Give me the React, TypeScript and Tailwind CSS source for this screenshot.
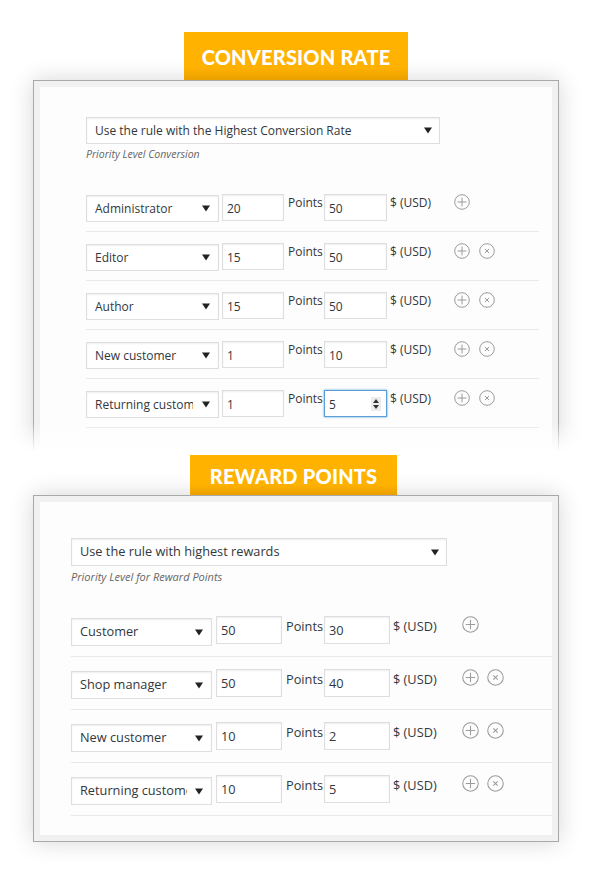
import React from "react";

type Cfg = {
  rowCls: string;
  selCls: string;
  selTextCls: string;
  arrowBoxCls: string;
  inpCls: string;
  labelCls: string;
  usdCls: string;
  iconGap: string;
  icon: number;
};

const c1: Cfg = {
  rowCls: "flex items-start pt-[11px] pb-[9px] border-b border-[#e9e9e9] text-[12px] text-[#32373c]",
  selCls: "mt-[1px] h-[27px] w-[133px] pl-[8px]",
  selTextCls: "",
  arrowBoxCls: "w-[25px]",
  inpCls: "h-[27px] pl-[4px]",
  labelCls: "leading-[18px]",
  usdCls: "ml-[3px] w-[64px] leading-[18px]",
  iconGap: "gap-[9px]",
  icon: 16,
};

const c2: Cfg = {
  rowCls: "flex items-start pt-[12px] pb-[10px] border-b border-[#e9e9e9] text-[12.75px] text-[#32373c]",
  selCls: "mt-[2px] h-[28px] w-[141px] pl-[8px]",
  selTextCls: "",
  arrowBoxCls: "w-[24px]",
  inpCls: "h-[28px] pl-[4px]",
  labelCls: "leading-[20px]",
  usdCls: "ml-[3px] w-[69px] leading-[20px]",
  iconGap: "gap-[8px]",
  icon: 17,
};

function Arrow() {
  return (
    <svg width="8" height="7" viewBox="0 0 8 7">
      <path d="M0 0.5h8L4 6.5z" fill="#222" />
    </svg>
  );
}

function PlusCircle({ size }: { size: number }) {
  return (
    <svg width={size} height={size} viewBox="0 0 16 16" fill="none" stroke="#9b9b9b" strokeWidth="1">
      <circle cx="8" cy="8" r="7.3" />
      <path d="M8 3.6v8.8M3.6 8h8.8" />
    </svg>
  );
}

function XCircle({ size }: { size: number }) {
  return (
    <svg width={size} height={size} viewBox="0 0 16 16" fill="none" stroke="#9b9b9b" strokeWidth="1">
      <circle cx="8" cy="8" r="7.3" />
      <path d="M5.9 5.9l4.2 4.2M10.1 5.9l-4.2 4.2" />
    </svg>
  );
}

function Select({ text, cls, arrowBox }: { text: string; cls: string; arrowBox: string }) {
  return (
    <div
      className={`flex items-center bg-white border border-[#dedede] shadow-[inset_0_1px_2px_rgba(0,0,0,0.07)] ${cls}`}
    >
      <span className="flex-1 min-w-0 overflow-hidden whitespace-nowrap">{text}</span>
      <span className={`flex justify-center items-center shrink-0 ${arrowBox}`}>
        <Arrow />
      </span>
    </div>
  );
}

function Input({ value, cls, focused }: { value: string; cls: string; focused?: boolean }) {
  return (
    <div
      className={`flex items-center bg-white border ${
        focused
          ? "border-[#5b9dd9] shadow-[0_0_2px_rgba(30,140,190,0.8)]"
          : "border-[#dedede] shadow-[inset_0_1px_2px_rgba(0,0,0,0.07)]"
      } ${cls}`}
    >
      <span className="flex-1 pt-[2px]">{value}</span>
      {focused && (
        <span className="mr-[5px] flex flex-col items-center justify-center gap-[2px] w-[10px] h-[14px] bg-[#ececec]">
          <svg width="6" height="4" viewBox="0 0 6 4">
            <path d="M0 4L3 0L6 4z" fill="#333" />
          </svg>
          <svg width="6" height="4" viewBox="0 0 6 4">
            <path d="M0 0L3 4L6 0z" fill="#333" />
          </svg>
        </span>
      )}
    </div>
  );
}

type Row = { role: string; pts: string; usd: string; remove: boolean; focused?: boolean };

function RuleRow({ r, c, w }: { r: Row; c: Cfg; w: { in1: string; lbl: string; in2: string; gap: string } }) {
  return (
    <div className={c.rowCls}>
      <Select text={r.role} cls={c.selCls} arrowBox={c.arrowBoxCls} />
      <Input value={r.pts} cls={`${c.inpCls} ${w.in1} ${w.gap}`} />
      <span className={`${c.labelCls} ${w.lbl}`}>Points</span>
      <Input value={r.usd} cls={`${c.inpCls} ${w.in2}`} focused={r.focused} />
      <span className={c.usdCls}>$ (USD)</span>
      <div className={`flex ${c.iconGap}`}>
        <PlusCircle size={c.icon} />
        {r.remove && <XCircle size={c.icon} />}
      </div>
    </div>
  );
}

const rows1: Row[] = [
  { role: "Administrator", pts: "20", usd: "50", remove: false },
  { role: "Editor", pts: "15", usd: "50", remove: true },
  { role: "Author", pts: "15", usd: "50", remove: true },
  { role: "New customer", pts: "1", usd: "10", remove: true },
  { role: "Returning customer", pts: "1", usd: "5", remove: true, focused: true },
];

const rows2: Row[] = [
  { role: "Customer", pts: "50", usd: "30", remove: false },
  { role: "Shop manager", pts: "50", usd: "40", remove: true },
  { role: "New customer", pts: "10", usd: "2", remove: true },
  { role: "Returning customer", pts: "10", usd: "5", remove: true },
];

function Banner({ text, cls }: { text: string; cls: string }) {
  return (
    <div
      className={`relative z-20 flex items-center justify-center text-white font-['Lato',sans-serif] font-black tracking-[0.2px] bg-[linear-gradient(to_bottom,#ffb400_0%,#ffb100_75%,#e9a000_100%)] ${cls}`}
    >
      {text}
    </div>
  );
}

export default function App() {
  return (
    <div className="w-[600px] min-h-[894px] bg-white font-['Open_Sans',sans-serif] overflow-hidden">
      <div className="w-[559px] pl-[33px] pt-[32px] flex flex-col">
        <div className="flex justify-center w-[526px]">
          <Banner text="CONVERSION RATE" cls="w-[224px] h-[48px] text-[20px] pt-[1px]" />
        </div>

        {/* Panel 1 */}
        <div className="relative z-0 w-[526px] h-[375px] flex flex-col border border-[#a9a9a9] bg-[#f1f1f1] pt-[6px] px-[6px] shadow-[0_0_22px_rgba(0,0,0,0.16)]">
          <div className="flex-1 min-h-0 overflow-hidden bg-[#fdfdfd] pl-[46px] pr-[13px] pt-[30px]">
            <Select
              text="Use the rule with the Highest Conversion Rate"
              cls="h-[27px] w-[354px] pl-[8px] text-[12px] text-[#32373c]"
              arrowBox="w-[23px]"
            />
            <div className="mt-[3px] text-[10.5px] leading-[14px] italic text-[#666]">Priority Level Conversion</div>
            <div className="mt-[22px] flex flex-col">
              {rows1.map((r) => (
                <RuleRow
                  key={r.role}
                  r={r}
                  c={c1}
                  w={{ in1: "w-[62px]", lbl: "ml-[4px] w-[36px]", in2: "w-[63px]", gap: "ml-[3px]" }}
                />
              ))}
            </div>
          </div>
          <div className="absolute left-[-40px] right-[-40px] bottom-[-30px] h-[62px] bg-[linear-gradient(to_bottom,rgba(255,255,255,0)_0%,#ffffff_48%,#ffffff_100%)]" />
        </div>

        <div className="flex justify-center w-[526px]">
          <Banner text="REWARD POINTS" cls="w-[207px] h-[40px] text-[20px] mr-[5px] pt-[2px]" />
        </div>

        {/* Panel 2 */}
        <div className="relative z-10 w-[526px] flex flex-col border border-[#a9a9a9] bg-[#f1f1f1] p-[6px] shadow-[0_0_22px_rgba(0,0,0,0.16)]">
          <div className="bg-[#fdfdfd] pl-[31px] pt-[36px] pb-[19px]">
            <Select
              text="Use the rule with highest rewards"
              cls="h-[28px] w-[376px] pl-[8px] text-[12.75px] text-[#32373c]"
              arrowBox="w-[23px]"
            />
            <div className="mt-[4px] text-[11px] leading-[14px] italic text-[#666]">Priority Level for Reward Points</div>
            <div className="mt-[20px] flex flex-col">
              {rows2.map((r) => (
                <RuleRow
                  key={r.role}
                  r={r}
                  c={c2}
                  w={{ in1: "w-[66px]", lbl: "ml-[4px] w-[38px]", in2: "w-[66px]", gap: "ml-[4px]" }}
                />
              ))}
            </div>
          </div>
        </div>
      </div>
    </div>
  );
}
